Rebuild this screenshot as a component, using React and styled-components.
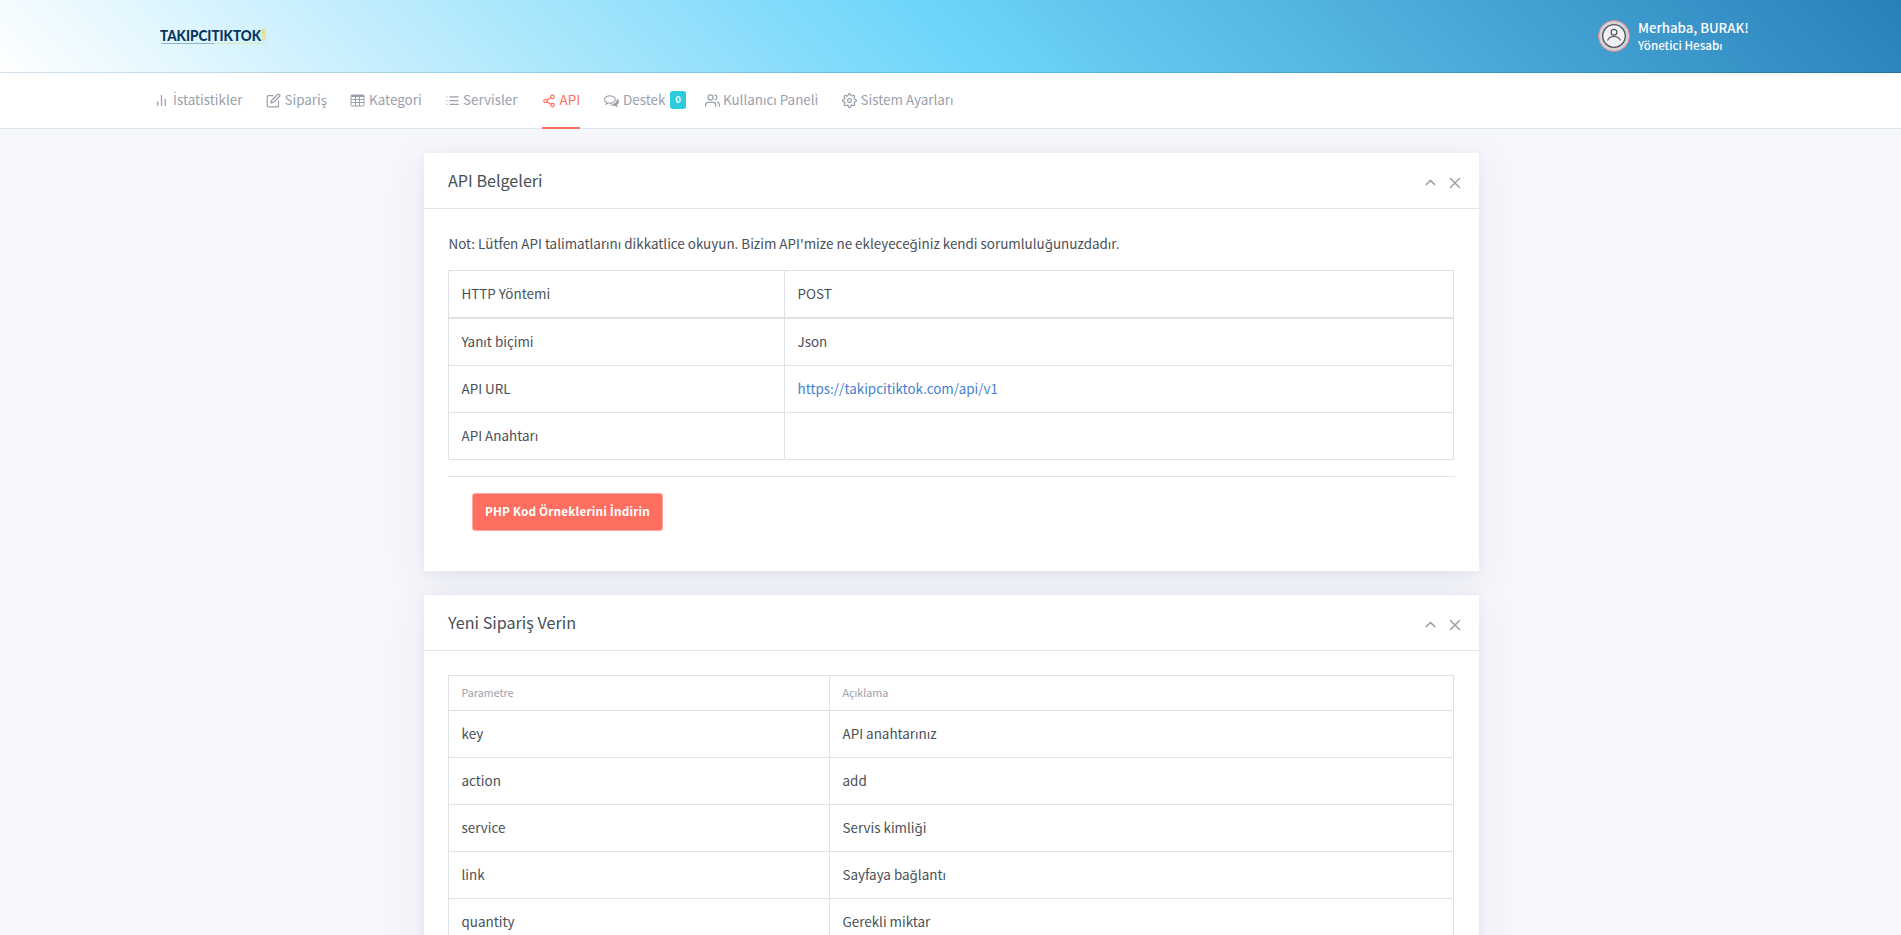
import React from "react";
import styled, { createGlobalStyle } from "styled-components";
import { FiEdit, FiUsers, FiShare2, FiList, FiBarChart2, FiSettings, FiChevronUp, FiX } from "react-icons/fi";

const GlobalStyle = createGlobalStyle`
  *, *::before, *::after { box-sizing: border-box; }
  html, body { height: 100%; overflow: hidden; }
  body {
    margin: 0;
    background: #f5f7fb;
    color: #495057;
    font-family: "Noto Sans CJK SC", "Noto Sans", sans-serif;
    font-size: 13.43px;
    line-height: 22px;
  }
`;

const Page = styled.div`
  height: 935px;
  overflow: hidden;
`;

const Header = styled.header`
  height: 73px;
  padding: 0 151px 0 160px;
  display: flex;
  align-items: center;
  justify-content: space-between;
  background: linear-gradient(45deg, #ffffff, #6dd5fa, #2980b9);
  border-bottom: 1px solid rgba(0, 40, 100, 0.12);
`;

const Logo = styled.svg`
  display: block;
  overflow: visible;
  width: 108px;
  height: 24px;
`;

const Account = styled.div`
  width: 152px;
  display: flex;
  align-items: center;
  gap: 8px;
  color: #fff;
  white-space: nowrap;
`;

const Avatar = styled.svg`
  flex: none;
  width: 32px;
  height: 32px;
`;

const Greeting = styled.div`
  font-size: 13.2px;
  line-height: 17px;
  font-weight: 500;
`;

const Role = styled.div`
  font-size: 11.6px;
  line-height: 18px;
  font-weight: 500;
`;

const Nav = styled.nav`
  height: 56px;
  padding-left: 154px;
  display: flex;
  background: #fff;
  border-bottom: 1px solid #dfe3ee;
`;

const NavItem = styled.a`
  flex: none;
  width: ${(p) => p.$width}px;
  margin-right: ${(p) => p.$after ?? 24}px;
  height: 56px;
  display: flex;
  align-items: center;
  padding: ${(p) => (p.$active ? "1px 0 0" : "0 0 1px")};
  border-bottom: ${(p) => (p.$active ? "2px solid #ff6f61" : "0")};
  color: ${(p) => (p.$active ? "#ff6f61" : "#9aa0ac")};
  white-space: nowrap;
`;

const NavIcon = styled.span`
  flex: none;
  width: ${(p) => p.$width}px;
  display: flex;
  svg { flex: none; }
`;

const NavLabel = styled.span`
  padding-bottom: 3px;
`;

const DottedI = styled.span`
  font-family: "Open Sans", sans-serif;
  font-size: 1.05em;
  line-height: 1;
`;

const Badge = styled.span`
  width: 16px;
  height: 18px;
  margin: 0 0 1px auto;
  border-radius: 3px;
  background: #2bcbe0;
  color: #fff;
  font-size: 9.5px;
  font-weight: 700;
  line-height: 16px;
  text-align: center;
`;

const Main = styled.main`
  width: 1055px;
  margin: 24px 0 0 424px;
  display: flex;
  flex-direction: column;
  gap: 24px;
`;

const Card = styled.section`
  height: ${(p) => p.$height}px;
  background: #fff;
  box-shadow: 0 10px 40px 0 rgba(62, 57, 107, 0.07), 0 2px 9px 0 rgba(62, 57, 107, 0.06);
`;

const CardHeader = styled.div`
  height: 56px;
  padding: 0 15px 0 24px;
  display: flex;
  align-items: center;
  border-bottom: 1px solid #dfe3ee;
`;

const CardTitle = styled.h3`
  margin: 0 auto 0 0;
  padding-bottom: 2px;
  font-size: 16.15px;
  line-height: 24px;
  font-weight: 400;
`;

const CardTools = styled.div`
  display: flex;
  align-items: center;
  gap: 7px;
  padding-top: 4px;
  color: #9aa0ac;
`;

const CardBody = styled.div`
  padding: 24px;
`;

const Note = styled.p`
  margin: 0;
  height: 37px;
  padding-left: 0.5px;
  line-height: 20px;
`;

const Table = styled.div`
  width: 1006px;
  border: 1px solid #dee2e6;
  border-bottom: 0;
`;

const Row = styled.div`
  height: ${(p) => p.$height ?? 47}px;
  display: grid;
  grid-template-columns: ${(p) => p.$first}px 1fr;
  border-bottom: ${(p) => (p.$thick ? 2 : 1)}px solid #dee2e6;
`;

const Cell = styled.div`
  display: flex;
  align-items: center;
  padding: 0 12px 2px 12.5px;
  & + & { border-left: 1px solid #dee2e6; }
`;

const HeadCell = styled(Cell)`
  padding-bottom: 1px;
  color: #9aa0ac;
  font-size: 10.74px;
`;

const Link = styled.a`
  color: #467fcf;
`;

const Divider = styled.hr`
  margin: 16px 0;
  border: 0;
  border-top: 1px solid #dfe3ee;
`;

const Button = styled.button`
  display: block;
  width: 191px;
  height: 38px;
  margin-left: 24px;
  padding: 0 0 2px;
  border: 1px solid #ffa79e;
  border-radius: 3px;
  background: #ff6f61;
  color: #fff;
  font: 700 11.75px/22px "Noto Sans CJK SC", "Noto Sans", sans-serif;
  letter-spacing: 0.17px;
  white-space: nowrap;
`;

const CommentsIcon = ({ size }) => (
  <svg width={size} height={size} viewBox="0 0 1792 1792" fill="currentColor">
    <path d="M704 384q-153 0-286 52t-211.500 141-78.500 191q0 82 53 158t149 132l97 56-35 84q34-20 62-39l44-31 53 10q78 14 153 14 153 0 286-52t211.500-141 78.500-191-78.500-191-211.500-141-286-52zm0-128q191 0 353.500 68.500t256.500 186.500 94 257-94 257-256.500 186.500-353.500 68.500q-86 0-176-16-124 88-278 128-36 9-86 16h-3q-11 0-20.500-8t-11.500-21q-1-3-1-6.500t.5-6.500 2-6l2.500-5 3.500-5.500 4-5 4.500-5 4-4.500q5-6 23-25t26-29.500 22.500-29 25-38.500 20.500-44q-124-72-195-177t-71-224q0-139 94-257t256.500-186.500 353.500-68.500zm822 1169q10 24 20.500 44t25 38.500 22.500 29 26 29.500 23 25q1 1 4 4.500t4.500 5 4 5 3.500 5.500l2.500 5t2 6 .5 6.500-1 6.500q-3 14-13 22t-22 7q-50-7-86-16-154-40-278-128-90 16-176 16-271 0-472-132 58 4 88 4 161 0 309-45t264-129q125-92 192-212t67-254q0-77-23-152 129 71 204 178t75 230q0 120-71 224.500t-195 176.500z" />
  </svg>
);

const TableIcon = ({ size }) => (
  <svg width={size} height={size} viewBox="0 0 15 15" fill="none" stroke="currentColor">
    <rect x="1" y="2" width="13" height="11" rx="0.8" />
    <path d="M1 3h13" strokeWidth="2" />
    <path d="M1 6.500h13M1 9.500h13M5.500 3v10M9.500 3v10" />
  </svg>
);

const NAV = [
  { label: "İstatistikler", Icon: FiBarChart2, slot: 19, width: 88 },
  { label: "Sipariş", Icon: FiEdit, slot: 18.5, width: 60.5, after: 23 },
  { label: "Kategori", Icon: TableIcon, slot: 19.5, width: 71.5, after: 24 },
  { label: "Servisler", Icon: FiList, slot: 18, width: 73 },
  { label: "API", Icon: FiShare2, size: 14, slot: 17.5, width: 38 },
  { label: "Destek", Icon: CommentsIcon, slot: 19, width: 82, after: 18.5, badge: "0" },
  { label: "Kullanıcı Paneli", Icon: FiUsers, slot: 18.5, width: 113 },
  { label: "Sistem Ayarları", Icon: FiSettings, slot: 19, width: 111 },
];

const METHOD_ROWS = [
  ["HTTP Yöntemi", "POST"],
  ["Yanıt biçimi", "Json"],
  ["API URL", <Link key="url">https://takipcitiktok.com/api/v1</Link>],
  ["API Anahtarı", ""],
];

const PARAM_ROWS = [
  ["key", "API anahtarınız"],
  ["action", "add"],
  ["service", "Servis kimliği"],
  ["link", "Sayfaya bağlantı"],
  ["quantity", "Gerekli miktar"],
];

function Turkish({ children }) {
  return children.split(/(İ)/).map((part, i) => (part === "İ" ? <DottedI key={i}>İ</DottedI> : part));
}

function Panel({ title, height, children }) {
  return (
    <Card $height={height}>
      <CardHeader>
        <CardTitle>{title}</CardTitle>
        <CardTools>
          <FiChevronUp size={17} />
          <FiX size={18} />
        </CardTools>
      </CardHeader>
      <CardBody>{children}</CardBody>
    </Card>
  );
}

export default function App() {
  return (
    <Page>
      <GlobalStyle />
      <Header>
        <Logo viewBox="0 0 108 24">
          <text x="0" y="17.3" textLength="101" lengthAdjust="spacingAndGlyphs" fontFamily="Lato, sans-serif" fontWeight="900" fontSize="15.8" fill="#08365c">TAKIPCITIKTOK</text>
          <text transform="translate(106 17.5) rotate(-90)" textLength="13" lengthAdjust="spacingAndGlyphs" fontFamily="Lato, sans-serif" fontWeight="900" fontSize="5.8" fill="#f5d742">.COM</text>
          <rect x="1" y="19" width="53" height="1" fill="#8fb2cb" />
          <rect x="54" y="19" width="52" height="1" fill="#dce9c0" />
        </Logo>
        <Account>
          <Avatar viewBox="0 0 32 32">
            <circle cx="16" cy="16" r="15.5" fill="#d0d3da" stroke="#dc8585" />
            <circle cx="16" cy="16" r="11.3" fill="#f0f0f5" stroke="#50535c" strokeWidth="1.3" />
            <circle cx="16" cy="12.3" r="2.9" fill="none" stroke="#50535c" strokeWidth="1.2" />
            <path d="M9.5 20.5c1.2-2.7 3.5-4 6.5-4s5.3 1.3 6.5 4" fill="none" stroke="#50535c" strokeWidth="1.2" />
          </Avatar>
          <div>
            <Greeting>Merhaba, BURAK!</Greeting>
            <Role>Yönetici Hesabı</Role>
          </div>
        </Account>
      </Header>
      <Nav>
        {NAV.map(({ label, Icon, size = 15, slot, width, after, badge }) => (
          <NavItem key={label} $width={width} $after={after} $active={label === "API"}>
            <NavIcon $width={slot}><Icon size={size} /></NavIcon>
            <NavLabel><Turkish>{label}</Turkish></NavLabel>
            {badge && <Badge>{badge}</Badge>}
          </NavItem>
        ))}
      </Nav>
      <Main>
        <Panel title="API Belgeleri" height={418}>
          <Note>Not: Lütfen API talimatlarını dikkatlice okuyun. Bizim API'mize ne ekleyeceğiniz kendi sorumluluğunuzdadır.</Note>
          <Table>
            {METHOD_ROWS.map(([name, value], i) => (
              <Row key={name} $first={335} $thick={i === 0} $height={i === 0 ? 48 : 47}>
                <Cell>{name}</Cell>
                <Cell>{value}</Cell>
              </Row>
            ))}
          </Table>
          <Divider />
          <Button><Turkish>PHP Kod Örneklerini İndirin</Turkish></Button>
        </Panel>
        <Panel title="Yeni Sipariş Verin" height={420}>
          <Table>
            <Row $first={380} $height={35}>
              <HeadCell>Parametre</HeadCell>
              <HeadCell>Açıklama</HeadCell>
            </Row>
            {PARAM_ROWS.map(([name, value]) => (
              <Row key={name} $first={380}>
                <Cell>{name}</Cell>
                <Cell>{value}</Cell>
              </Row>
            ))}
          </Table>
        </Panel>
      </Main>
    </Page>
  );
}
